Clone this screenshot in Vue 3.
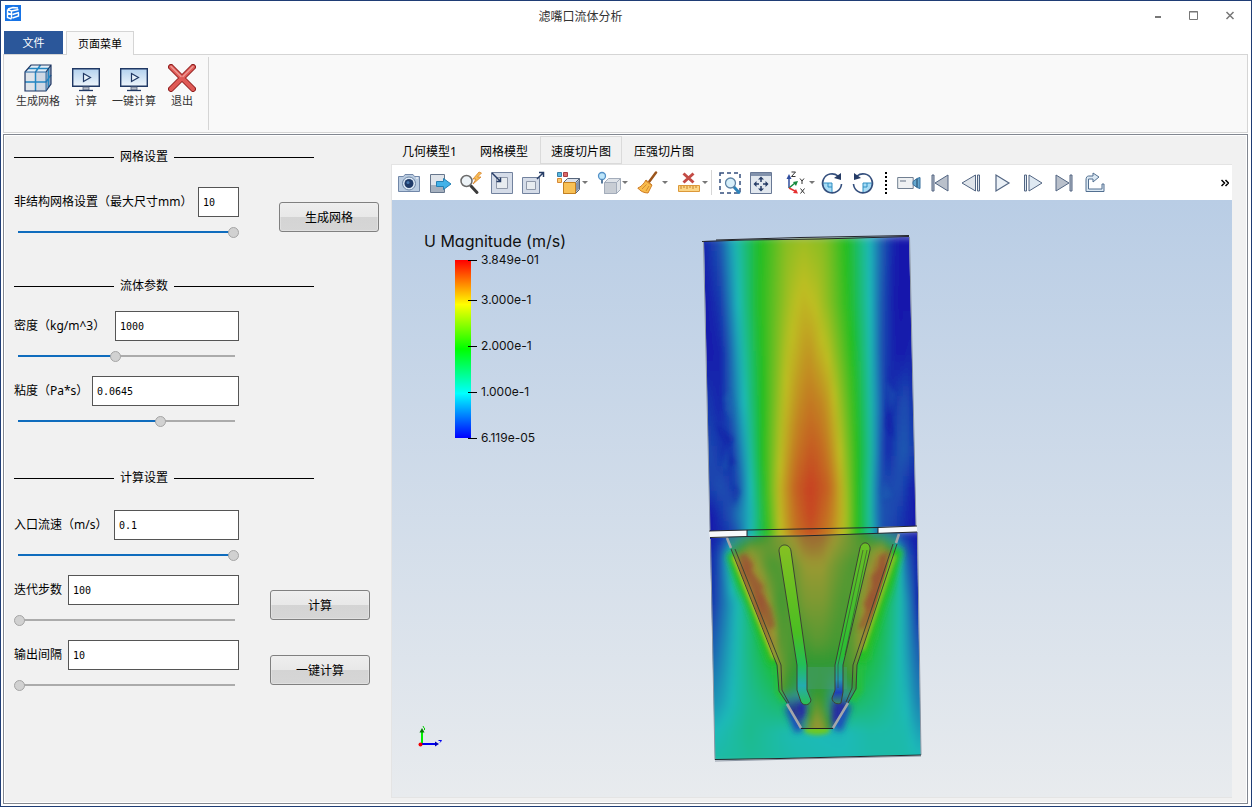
<script setup>
import { ref, reactive } from 'vue'

const sections = reactive([
  {
    title: '网格设置',
    name: 'mesh',
    fields: [
      { id: 'size', label: '非结构网格设置（最大尺寸mm）', value: '10', box: 41, pos: 100, action: '生成网格', wide: true },
    ],
  },
  {
    title: '流体参数',
    name: 'fluid',
    fields: [
      { id: 'density', label: '密度（kg/m^3）', value: '1000', box: 124, pos: 45 },
      { id: 'viscosity', label: '粘度（Pa*s）', value: '0.0645', box: 147, pos: 66 },
    ],
  },
  {
    title: '计算设置',
    name: 'solve',
    fields: [
      { id: 'inlet', label: '入口流速（m/s）', value: '0.1', box: 125, pos: 100 },
      { id: 'steps', label: '迭代步数', value: '100', box: 171, pos: 0, action: '计算' },
      { id: 'interval', label: '输出间隔', value: '10', box: 171, pos: 0, action: '一键计算' },
    ],
  },
])

const views = ['几何模型1', '网格模型', '速度切片图', '压强切片图']
const activeView = ref(2)

const legend = [
  { text: '3.849e-01', y: 0 },
  { text: '3.000e-1', y: 40 },
  { text: '2.000e-1', y: 86 },
  { text: '1.000e-1', y: 132 },
  { text: '6.119e-05', y: 178 },
]

/* Velocity samples: y, then [x, normalised magnitude] pairs */
const upperRows = [
  [236, [[704, 0.02], [720, 0.1], [737, 0.27], [760, 0.5], [785, 0.66], [803, 0.7], [825, 0.66], [847, 0.5], [867, 0.27], [885, 0.08], [896, 0], [912, 0]]],
  [300, [[705, 0], [720, 0.05], [738, 0.25], [759, 0.5], [790, 0.72], [803, 0.77], [817, 0.74], [829, 0.66], [849, 0.5], [870, 0.25], [883, 0.08], [895, 0], [912, 0]]],
  [350, [[706, 0], [722, 0.02], [741, 0.25], [761, 0.5], [787, 0.74], [808, 0.83], [828, 0.74], [853, 0.5], [871, 0.25], [883, 0.07], [897, 0], [913, 0.02]]],
  [400, [[707, 0.05], [720, 0.02], [730, 0.1], [744, 0.25], [762, 0.5], [784, 0.75], [800, 0.85], [811, 0.88], [825, 0.84], [835, 0.75], [856, 0.5], [872, 0.25], [882, 0.1], [888, 0.02], [905, 0.09], [914, 0.03]]],
  [450, [[709, 0.08], [730, 0.02], [748, 0.25], [762, 0.5], [781, 0.75], [795, 0.88], [812, 0.94], [826, 0.89], [840, 0.75], [858, 0.5], [873, 0.25], [880, 0.1], [887, 0.02], [903, 0.11], [915, 0.05]]],
  [485, [[709, 0.06], [722, 0.09], [735, 0.04], [750, 0.25], [764, 0.5], [778, 0.75], [795, 0.92], [811, 0.98], [830, 0.91], [843, 0.75], [858, 0.5], [872, 0.25], [880, 0.08], [900, 0.08], [915, 0]]],
  [512, [[711, 0], [730, 0.09], [752, 0.25], [765, 0.5], [779, 0.75], [795, 0.9], [811, 0.97], [830, 0.88], [844, 0.75], [858, 0.5], [871, 0.27], [879, 0.1], [895, 0.07], [915, 0]]],
  [540, [[711, 0], [735, 0.05], [750, 0.25], [767, 0.5], [779, 0.72], [795, 0.88], [812, 0.93], [830, 0.85], [845, 0.72], [858, 0.5], [870, 0.3], [882, 0.08], [916, 0]]],
]
const lowerRows = [
  [530, [[711, 0], [728, 0.06], [740, 0.15], [790, 0.3], [885, 0.15], [897, 0.05], [917, 0]]],
  [555, [[711, 0.02], [722, 0.12], [730, 0.3], [740, 0.6], [890, 0.6], [897, 0.35], [904, 0.15], [917, 0.01]]],
  [600, [[713, 0.05], [725, 0.15], [740, 0.28], [755, 0.4], [770, 0.55], [875, 0.5], [888, 0.38], [900, 0.27], [912, 0.12], [918, 0.02]]],
  [650, [[714, 0.12], [735, 0.25], [755, 0.38], [775, 0.5], [860, 0.5], [885, 0.37], [905, 0.22], [919, 0.1]]],
  [700, [[716, 0.19], [745, 0.3], [775, 0.37], [790, 0.4], [850, 0.4], [880, 0.33], [905, 0.25], [920, 0.15]]],
  [730, [[716, 0.25], [750, 0.32], [790, 0.26], [840, 0.24], [870, 0.28], [905, 0.27], [921, 0.2]]],
  [764, [[716, 0.29], [760, 0.3], [800, 0.27], [850, 0.26], [890, 0.28], [921, 0.27]]],
]
const innerRows = [
  [528, [[730, 0.08], [750, 0.2], [775, 0.66], [795, 0.82], [805, 0.9], [822, 0.9], [835, 0.78], [860, 0.55], [880, 0.15], [898, 0.05]]],
  [545, [[732, 0.3], [750, 0.65], [770, 0.62], [790, 0.7], [806, 0.84], [820, 0.84], [835, 0.72], [860, 0.58], [882, 0.7], [893, 0.4]]],
  [562, [[740, 0.85], [746, 0.92], [757, 0.72], [770, 0.55], [790, 0.62], [806, 0.75], [822, 0.75], [838, 0.64], [855, 0.55], [868, 0.68], [880, 0.92], [893, 0.85]]],
  [600, [[752, 0.82], [760, 0.95], [768, 0.75], [778, 0.54], [795, 0.6], [806, 0.68], [824, 0.68], [838, 0.58], [850, 0.56], [863, 0.72], [872, 0.95], [880, 0.9]]],
  [640, [[765, 0.85], [773, 0.82], [780, 0.6], [800, 0.54], [818, 0.6], [838, 0.54], [855, 0.62], [862, 0.8], [868, 0.8]]],
  [665, [[779, 0.7], [787, 0.57], [800, 0.48], [815, 0.47], [835, 0.48], [850, 0.57], [857, 0.62]]],
  [688, [[781, 0.62], [790, 0.45], [800, 0.34], [812, 0.48], [822, 0.5], [835, 0.3], [848, 0.35], [857, 0.55]]],
  [704, [[788, 0.02], [803, 0.02], [811, 0.5], [817, 0.64], [825, 0.5], [834, 0.04], [848, 0.02]]],
  [730, [[796, 0.05], [802, 0.2], [808, 0.68], [817, 0.82], [827, 0.7], [832, 0.2], [838, 0.05]]],
]

const ramp = [[24, 24, 172], [30, 186, 184], [32, 190, 32], [190, 190, 32], [200, 52, 32]]

function colour(v, haze) {
  const t = Math.min(Math.max(v, 0), 0.999) * 4
  const i = Math.floor(t)
  const mix = ramp[i].map((c, k) => c + (ramp[i + 1][k] - c) * (t - i))
  return `rgb(${mix.map((c) => Math.round(c * (1 - haze) + 82 * haze)).join(',')})`
}

function sample(points, x) {
  if (x <= points[0][0]) return points[0][1]
  for (let i = 1; i < points.length; i++) {
    if (x <= points[i][0]) {
      const [x0, v0] = points[i - 1]
      const [x1, v1] = points[i]
      return v0 + ((v1 - v0) * (x - x0)) / (x1 - x0)
    }
  }
  return points[points.length - 1][1]
}

function strips(name, rows, haze) {
  const out = []
  const step = 5
  for (let y = rows[0][0]; y < rows[rows.length - 1][0]; y += step) {
    let r = rows.findIndex((row) => row[0] > y) - 1
    if (r < 0) r = 0
    const f = (y - rows[r][0]) / (rows[r + 1][0] - rows[r][0])
    const stops = []
    for (let k = 0; k <= 36; k++) {
      const x = 702 + k * 6
      const v = sample(rows[r][1], x) * (1 - f) + sample(rows[r + 1][1], x) * f
      stops.push({ at: k / 36, fill: colour(v, haze) })
    }
    out.push({ id: `${name}${y}`, y, stops })
  }
  return out
}

const upper = strips('u', upperRows, 0)
const lower = strips('l', lowerRows, 0)
const inner = strips('i', innerRows, 0.34)
const allStrips = [...upper, ...lower, ...inner]
</script>

<template>
  <div class="window">
    <header class="titlebar">
      <svg class="logo" viewBox="0 0 16 16" aria-hidden="true">
        <rect width="16" height="16" fill="#1673e6" />
        <path d="M2.5 4.5v8l4 1.5M2.5 8l4 1.500M2.500 4.500l4 1.500v7.500M6.500 6l7-1.500M7.500 9.500l6.500-2M7.500 13l6-2v-3M3 4l5-1.500 5 .5" fill="none" stroke="#fff" stroke-width="1.4" />
      </svg>
      <h1>滤嘴口流体分析</h1>
      <div class="controls">
        <button aria-label="最小化"><svg viewBox="0 0 12 12"><path d="M3 7h6" stroke="#777" stroke-width="2" /></svg></button>
        <button aria-label="最大化"><svg viewBox="0 0 12 12"><path d="M1.500 1.500h8v8h-8zM1 2h9" fill="none" stroke="#777" /></svg></button>
        <button aria-label="关闭"><svg viewBox="0 0 12 12"><path d="M2.500 2l7 7M9.500 2l-7 7" stroke="#777" stroke-width="1.500" /></svg></button>
      </div>
    </header>

    <nav class="menu">
      <button class="file">文件</button>
      <button class="page">页面菜单</button>
    </nav>

    <div class="ribbon">
      <div class="ribbon-group">
        <button>
          <svg viewBox="0 0 28 28">
            <path d="M1 8l6-7h20l-5 7z" fill="#e4eef7" />
            <path d="M1 8h21v19H1z" fill="#cfd8e4" />
            <path d="M2 9h9v8H2zM2 19h9v7H2z" fill="#dfe4ea" />
            <path d="M22 8l5-7v19l-5 7z" fill="#98a8c0" />
            <path d="M11.500 8v19M1 18h21l5-7M11.500 8l5-7M4 4.500h20.500v19" fill="none" stroke="#2487c2" stroke-width="1.500" />
            <path d="M1 8l6-7h20v19l-5 7H1zM22 8l5-7" fill="none" stroke="#203864" stroke-width="1.200" />
            <path d="M1 8h21v19" fill="none" stroke="#2b6ca6" />
          </svg>
          <span>生成网格</span>
        </button>
        <button v-for="name in ['计算', '一键计算']" :key="name">
          <svg viewBox="0 0 28 28">
            <defs><linearGradient id="screen" x2="0" y2="1"><stop stop-color="#b3d1ee" /><stop offset="1" stop-color="#eef5fb" /></linearGradient></defs>
            <path d="M.7 4.700h26.600v17.600H.7z" fill="url(#screen)" stroke="#203864" stroke-width="1.400" />
            <path d="M11 23h6v3h-6z" fill="#b8bec9" stroke="#566680" stroke-width=".8" />
            <path d="M7 26.500h14" stroke="#203864" stroke-width="1.300" />
            <path d="M11.500 9.500v8l7-4z" fill="#e8f2fa" stroke="#203864" stroke-width="1.200" />
          </svg>
          <span>{{ name }}</span>
        </button>
        <button>
          <svg viewBox="0 0 28 28">
            <path d="M3 3l22 22M25 3L3 25" stroke="#8f2020" stroke-width="6" stroke-linecap="round" />
            <path d="M3 3l22 22M25 3L3 25" stroke="#df5a56" stroke-width="4" stroke-linecap="round" />
            <path d="M3 2.500l10 10M25 2.500L15 12.500" stroke="#ee9a94" stroke-width="1.500" stroke-linecap="round" />
          </svg>
          <span>退出</span>
        </button>
      </div>
    </div>

    <main class="body">
      <form class="settings" @submit.prevent>
        <section v-for="s in sections" :key="s.name" :class="s.name">
          <h2>{{ s.title }}</h2>
          <div class="fields">
            <div v-for="f in s.fields" :key="f.id" class="field">
              <div class="entry">
                <div class="line">
                  <label :for="f.id">{{ f.label }}</label>
                  <input :id="f.id" v-model="f.value" type="text" :style="{ width: f.box + 'px' }" />
                </div>
                <input v-model="f.pos" type="range" min="0" max="100" :aria-label="f.label" :style="{ '--pos': f.pos + '%' }" />
              </div>
              <button v-if="f.action" type="button" class="push" :class="{ far: f.wide }">{{ f.action }}</button>
            </div>
          </div>
        </section>
      </form>

      <section class="viewer">
        <div class="tabs" role="tablist">
          <button v-for="(v, i) in views" :key="v" role="tab" :aria-selected="i === activeView" :class="{ active: i === activeView }" @click="activeView = i">{{ v }}</button>
        </div>
        <div class="frame">
          <div class="toolbar">
            <div class="tools">
              <button aria-label="截图"><svg viewBox="0 0 24 24">
                <path d="M1.500 5.500h5l1.500-2h8l1.500 2h5v15h-21z" fill="#b9cbe0" stroke="#7187a8" />
                <circle cx="12" cy="12.500" r="6.500" fill="#dde9f5" stroke="#6e86a6" /><circle cx="12" cy="12.500" r="4.500" fill="#1f3a68" /><circle cx="11" cy="11.500" r="1.500" fill="#4777ad" />
                <path d="M19 7h2" stroke="#fff" />
              </svg></button>
              <button aria-label="导出"><svg viewBox="0 0 24 24">
                <path d="M2.500 3.500h14v18h-14z" fill="#dfe4ea" stroke="#66768c" /><path d="M3 14h13v7H3z" fill="#a5b0be" />
                <path d="M8.500 10.500h7v-3l7.500 5.500-7.500 5.500v-3h-7z" fill="#43b2e8" stroke="#2480b4" />
              </svg></button>
              <button aria-label="快速查看"><svg viewBox="0 0 24 24">
                <path d="M12 15l6 6.500" stroke="#3b3b3b" stroke-width="3" stroke-linecap="round" /><circle cx="7.500" cy="10" r="5.500" fill="#edf3f7" stroke="#6a6a6a" stroke-width="1.500" />
                <path d="M20 1l-6 7h3l-3 5 8-7h-3.500l4-4z" fill="#f8bd55" stroke="#d5832a" stroke-width=".8" />
              </svg></button>
              <button aria-label="缩放至数据"><svg viewBox="0 0 24 24">
                <path d="M1.500 1.500h21v21h-21z" fill="#d5dce8" stroke="#72829e" /><path d="M6.500 6.500h11v11h-11z" fill="#e8ecf0" stroke="#9099aa" />
                <path d="M2 2l8 8M10.500 6.500v4h-4" fill="none" stroke="#263c66" stroke-width="1.500" />
              </svg></button>
              <button aria-label="缩放至最近"><svg viewBox="0 0 24 24">
                <path d="M1.500 6.500h17v16h-17z" fill="#d5dce8" stroke="#72829e" /><path d="M5.500 10.500h9v8h-9z" fill="#e8ecf0" stroke="#9099aa" />
                <path d="M16 8l6-6M18 1.500h4.500V6" fill="none" stroke="#263c66" stroke-width="1.500" />
              </svg></button>
            </div>
            <div class="tools combos">
              <button aria-label="着色"><svg viewBox="0 0 24 24">
                <path d="M.5 1.500h4v4h-4z" fill="#59b9df" stroke="#397fa8" /><path d="M6.500 1.500h4v4h-4z" fill="#db6b6b" stroke="#a63e44" /><path d="M.5 7.500h4v4h-4z" fill="#f8cb72" stroke="#d88734" />
                <path d="M6.500 11.500l4-4h12v11l-4 4h-12z" fill="#dce1ea" stroke="#56657b" /><path d="M6.500 11.500h12v11h-12z" fill="#f8c156" stroke="#c48020" /><path d="M18.500 11.500l4-4" stroke="#56657b" /><path d="M19 12l3-3v9l-3 3z" fill="#8593aa" />
              </svg><i></i></button>
              <button aria-label="光照"><svg viewBox="0 0 24 24">
                <path d="M7.500 11.500l4-4h12v11l-4 4h-12z" fill="#dfe3e8" stroke="#a3acba" /><path d="M7.500 11.500h12v11h-12z" fill="#c8cdd4" stroke="#a3acba" /><path d="M19.500 11.500l4-4" stroke="#a3acba" />
                <circle cx="5" cy="5" r="3.500" fill="#bce5fa" stroke="#5491c7" stroke-width="1.300" /><path d="M5 8.500v4" stroke="#597a9c" stroke-width="2" />
              </svg><i></i></button>
              <button aria-label="清除"><svg viewBox="0 0 24 24">
                <path d="M12 11l7-9.500" stroke="#9b551c" stroke-width="2.500" stroke-linecap="round" /><path d="M9 9l6 5-4 8C7 22 3 20 .8 17c3-1 6-4 8.200-8z" fill="#f9bc4b" stroke="#cf7c25" />
                <path d="M9.500 13.500L5 18M12 15l-3 5M8 9.500l7 5" stroke="#d08a34" />
              </svg><i></i></button>
              <button aria-label="删除标尺"><svg viewBox="0 0 24 24">
                <path d="M6.500 2.500l10 9M16.500 2.500l-10 9" stroke="#c34b45" stroke-width="3" /><path d="M1.500 14.500h21v6h-21z" fill="#fbd584" stroke="#dc9839" />
                <path d="M4 15v3M7 15v2M10 15v3M13 15v2M16 15v3M19 15v2" stroke="#c5812a" />
              </svg><i></i></button>
            </div>
            <span class="rule"></span>
            <div class="tools">
              <button aria-label="框选缩放"><svg viewBox="0 0 24 24">
                <path d="M2 2h20v20H2z" fill="none" stroke="#344f7d" stroke-width="1.500" stroke-dasharray="4 3" />
                <path d="M16 16l5 5.500" stroke="#2d83ba" stroke-width="3" stroke-linecap="round" /><circle cx="12.500" cy="12" r="5" fill="#d7effa" stroke="#5e83a5" stroke-width="1.300" />
              </svg></button>
              <button aria-label="适应窗口"><svg viewBox="0 0 24 24">
                <path d="M1.500 1.500h21v21h-21z" fill="#e1e7ee" stroke="#687895" /><path d="M2 2h20v3H2z" fill="#8292ac" />
                <path d="M12 8v3M12 15v3M7 13h3M14 13h3" stroke="#263c66" stroke-width="1.500" /><path d="M12 5.500l3 3H9zM12 20.500l3-3H9zM4.500 13l3-3v6zM19.500 13l-3-3v6z" fill="#263c66" />
              </svg></button>
            </div>
            <div class="tools axes">
              <button class="combo" aria-label="视图方向"><svg viewBox="0 0 24 24">
                <path d="M5 17V6" stroke="#304e9e" stroke-width="1.500" /><path d="M5 3l2.500 5h-5z" fill="#304e9e" /><path d="M5 17l6-5" stroke="#178a3d" stroke-width="1.500" /><path d="M14 10l-5 1 3 4z" fill="#178a3d" /><path d="M5 17l6 3" stroke="#e52f2f" stroke-width="1.500" /><path d="M14 22.500l-5-.5 3-4z" fill="#e52f2f" />
                <path d="M7.500 1h4l-4 4.500h4M16 7.500l2 2.500 2-2.500M18 10v3M16.500 17.500l4 5M20.500 17.500l-4 5" fill="none" stroke="#333" />
              </svg><i></i></button>
              <button v-for="n in 2" :key="n" :aria-label="n === 1 ? '顺时针旋转' : '逆时针旋转'"><svg viewBox="0 0 24 24" :class="{ flip: n === 2 }">
                <path d="M2.500 12h9.500v9.500A9.500 9.500 0 0 1 2.500 12z" fill="#a8dcf5" /><path d="M2.500 12H12v9.500M8 12v4h4" fill="none" stroke="#2f8fc4" />
                <path d="M21.500 13A9.500 9.500 0 1 1 18 5" fill="none" stroke="#344f7d" stroke-width="1.600" /><path d="M21 2v7l-7-2z" fill="#263c66" />
              </svg></button>
            </div>
            <span class="grip"></span>
            <div class="tools">
              <button aria-label="录制"><svg viewBox="0 0 24 24">
                <path d="M.7 6.500h15.500v11H.7z" fill="#eef0f2" stroke="#717f91" /><path d="M3 9h6v2H3z" fill="#a8b0bb" /><path d="M23 6.500v11l-3-1-4-3v-3l4-3z" fill="#65a8cf" stroke="#366e9c" /><path d="M20 8v8" stroke="#21415f" />
              </svg></button>
              <button aria-label="第一帧"><svg viewBox="0 0 24 24"><path d="M4 4h2v16H4zM20 4v16L7 12z" fill="#b9c0cb" stroke="#526582" /></svg></button>
              <button aria-label="上一帧"><svg viewBox="0 0 24 24"><path d="M18.500 4h2v16h-2zM16.500 4v16L3 12z" fill="#dfe4ea" stroke="#526582" /></svg></button>
              <button aria-label="播放"><svg viewBox="0 0 24 24"><path d="M6 4v16l13-8z" fill="#eaf0f6" stroke="#526582" stroke-width="1.200" /></svg></button>
              <button aria-label="下一帧"><svg viewBox="0 0 24 24"><path d="M3.500 4h2v16h-2zM8 4v16l13-8z" fill="#dfe9f2" stroke="#526582" /></svg></button>
              <button aria-label="最后一帧"><svg viewBox="0 0 24 24"><path d="M18 4h2v16h-2zM4 4v16l13-8z" fill="#b9c0cb" stroke="#526582" /></svg></button>
              <button aria-label="循环"><svg viewBox="0 0 24 24"><path d="M3 9V20.500h18V13h-2v5H5.500V8H10v3l6-5-6-4v3H5.500C4 5 3 6.500 3 9z" fill="#dbe8f3" stroke="#526f90" /></svg></button>
            </div>
            <button class="more" aria-label="更多"><svg viewBox="0 0 8 8"><path d="M.5 1l3 3-3 3M4.500 1l3 3-3 3" fill="none" stroke="#000" stroke-width="1.500" /></svg></button>
          </div>

          <div class="viewport">
            <div class="legend">
              <p>U Magnitude (m/s)</p>
              <div class="scale">
                <span v-for="l in legend" :key="l.text" :style="{ top: l.y + 'px' }">{{ l.text }}</span>
              </div>
            </div>

            <svg class="model" viewBox="700 230 224 536" role="img" aria-label="速度切片">
              <defs>
                <linearGradient v-for="s in allStrips" :id="s.id" :key="s.id" gradientUnits="userSpaceOnUse" x1="702" x2="918">
                  <stop v-for="p in s.stops" :key="p.at" :offset="p.at" :stop-color="p.fill" />
                </linearGradient>
                <linearGradient id="tubeL" x2="0" y2="1"><stop stop-color="#86c022" /><stop offset=".55" stop-color="#4abe22" /><stop offset=".75" stop-color="#22be58" /><stop offset=".88" stop-color="#24acb0" /><stop offset="1" stop-color="#2cbe50" /></linearGradient>
                <linearGradient id="tubeR" x2="0" y2="1"><stop stop-color="#6abe24" /><stop offset=".7" stop-color="#28be34" /><stop offset=".85" stop-color="#2496b0" /><stop offset=".93" stop-color="#2040b8" /><stop offset="1" stop-color="#3a8c60" /></linearGradient>
                <filter id="vsoft" x="-5%" y="-5%" width="110%" height="110%"><feGaussianBlur stdDeviation="2 4" /></filter>
                <filter id="soft" x="-50%" y="-50%" width="200%" height="200%"><feGaussianBlur stdDeviation="3" /></filter>
                <filter id="fine" x="-50%" y="-50%" width="200%" height="200%"><feGaussianBlur stdDeviation="2" /></filter>
                <clipPath id="cutU"><path d="M704 241L909 236 916 526 878 527V534L747 537V530L710 531z" /></clipPath>
                <clipPath id="cutL"><path d="M710 538L917 532 921 755 715 760z" /></clipPath>
                <clipPath id="cutI"><path d="M728 537L899 533 893 549 857 665 857 688 848 703 833 728H801L787 703 780 690 778 666 731 549z" /></clipPath>
              </defs>

              <path d="M709 530L917 525V533L710 539z" fill="#f6f8fa" />

              <g clip-path="url(#cutL)">
                <g filter="url(#vsoft)"><rect v-for="s in lower" :key="s.id" x="695" :y="s.y" width="235" height="6" :fill="`url(#${s.id})`" /></g>
                <path d="M734 552L777 662" stroke="#28be28" stroke-width="16" filter="url(#soft)" />
                <path d="M897 548L860 658" stroke="#28be28" stroke-width="14" filter="url(#soft)" />
                <path d="M735 555L776 658" stroke="#d2c020" stroke-width="7" filter="url(#fine)" />
                <path d="M894 555L862 650" stroke="#b4c022" stroke-width="4" filter="url(#fine)" />
                <path d="M779 666V691L785 700M859 666V690L852 699" fill="none" stroke="#28be40" stroke-width="8" filter="url(#fine)" />
                <path d="M789 706L800 731M847 704L837 730" stroke="#1c48ba" stroke-width="10" filter="url(#soft)" />
                <ellipse cx="817" cy="730" rx="13" ry="5" fill="#70c820" filter="url(#fine)" />
              </g>
              <g clip-path="url(#cutU)">
                <g filter="url(#vsoft)"><rect v-for="s in upper" :key="s.id" x="695" :y="s.y" width="235" height="6" :fill="`url(#${s.id})`" /></g>
                <g filter="url(#fine)" opacity=".35">
                  <path d="M724 406l10-4-2 18zM726 448l10 20-14 2zM722 400l8-10 3 16zM884 480l8 16-10 4zM886 380l10 14-8 26z" fill="#1a6cb4" />
                  <path d="M716 425l18 14-6 8zM728 452l8 12-8 6zM888 400l6 40-8-14zM734 484l6 8-6 14z" fill="#1010a0" />
                </g>
              </g>
              <g clip-path="url(#cutI)">
                <g filter="url(#vsoft)"><rect v-for="s in inner" :key="s.id" x="695" :y="s.y" width="235" height="6" :fill="`url(#${s.id})`" /></g>
                <g filter="url(#fine)">
                  <path d="M738 556l8-3 7 12-2 5 12 16-2 6 10 16 4 18-6 4zM890 550l-11 6 1 12-9 8 2 12-10 16 3 6-9 20 8-3z" fill="#984a30" opacity=".6" />
                  <path d="M797 706l7-6 1 12-5 10zM836 702l10 3-7 14-6 3z" fill="#272ea2" />
                </g>
                <path d="M797 667H847V689H797z" fill="#4a9a78" opacity=".4" />
              </g>

              <path d="M779 551C779 543 790 543 791 551L807 665V690L811 700C810 706 803 706 801 702L797 690V665z" fill="url(#tubeL)" />
              <path d="M860 548C862 540 871 542 870 550L843 665V692L841 703C838 705 832 703 832 698L835 690V665z" fill="url(#tubeR)" />

              <g fill="none" stroke="#3c4234" stroke-width="1">
                <path d="M779 551C779 543 790 543 791 551L807 665V690L811 700C810 706 803 706 801 702L797 690V665z" />
                <path d="M860 548C862 540 871 542 870 550L843 665V692L841 703C838 705 832 703 832 698L835 690V665z" />
                <path d="M863 550L838 665V688M867 550L845 655" stroke-opacity=".6" />
                <path d="M731 549L777 665 779 691 787 703M735 549L781 665 782 690 789 703" />
                <path d="M897 544L857 665 856 689 848 703M893 544L853 665 852 688 846 702" />
                <path d="M801 728.500H833" stroke="#222" />
              </g>
              <g stroke="#a4a6aa" stroke-width="2.500">
                <path d="M727 538L731 548M899 534L896 543M787 704L801 728M848 703L833 728" />
              </g>
              <g fill="none" stroke="#8c96a4">
                <path d="M703.500 242L710 530M909.500 237L916 526M710.500 539L715 760M917.500 532L921 755" />
                <path d="M715 761L921 756" />
              </g>
              <g fill="none" stroke="#24262a">
                <path d="M702 241.500L745 240 820 239 909 236.500M716 240L800 237.500 909 235.500" />
                <path d="M709 531L747 530V536M917 526L878 527.500V533M747 530L878 527.500M710 537.500L747 536.500 800 536 917 532" />
                <path d="M715 759.500L780 758.500 921 755" />
              </g>
            </svg>

            <svg class="gizmo" viewBox="0 0 26 24" aria-hidden="true">
              <path d="M4 19h15" stroke="#0000f0" stroke-width="2" /><path d="M18 16.500l4 2.500-4 2.500z" fill="#0000b8" /><path d="M21.500 15.500h3l-1.500 2" fill="none" stroke="#0000f0" />
              <path d="M5 18V6" stroke="#00f000" stroke-width="2" /><path d="M5 3l2.500 4.500h-5z" fill="#067806" /><path d="M6 1l1 2M7.500 5V3" stroke="#00d000" />
              <circle cx="3.500" cy="19.500" r="2" fill="#f00000" />
            </svg>
          </div>
        </div>
      </section>
    </main>
  </div>
</template>

<style>
body { margin: 0; }
</style>

<style scoped>
* { box-sizing: border-box; }
.window {
  display: flex; flex-direction: column; min-height: 100vh; padding: 0 3px 2px 2px;
  border: 1px solid #1f3d75; background: #fff; color: #000;
  font-family: "Noto Sans", "Noto Sans CJK SC", sans-serif; font-size: 12px; line-height: 16px;
}
button { margin: 0; padding: 0; border: 0; background: none; color: inherit; font: inherit; }
svg { display: block; }

.titlebar { display: flex; height: 30px; align-items: center; }
.logo { width: 16px; height: 16px; margin: 0 0 6px 2px; }
h1 { flex: 1; margin: 0; padding-top: 1px; font-size: 12px; font-weight: 400; text-align: center; color: #333; }
.controls { display: flex; justify-content: flex-end; gap: 24px; padding: 0 12px; }
.controls svg { width: 12px; height: 12px; }

.menu { display: flex; gap: 3px; height: 23px; padding-left: 1px; font-size: 11px; }
.menu .file { width: 59px; background: #2b579a; color: #fff; }
.menu .page { position: relative; z-index: 1; width: 68px; height: 24px; border: 1px solid #d5d5d5; border-bottom: 0; background: #f9f9f9; }

.ribbon { display: flex; height: 79px; padding: 2px 0; border: 1px solid #d5d5d5; background: #f9f9f9; font-size: 11px; color: #333; }
.ribbon-group { display: flex; padding: 7px 2px 0 10px; border-right: 1px solid #d5d5d5; }
.ribbon-group button { display: flex; flex-direction: column; align-items: center; gap: 1px; width: 48px; white-space: nowrap; }
.ribbon-group svg { width: 28px; height: 28px; }

.body {
  display: grid; grid-template-columns: 386px minmax(0, 1fr); flex: 1; margin-top: 1px; padding: 1px;
  border: 1px solid #828790; background: #f1f1f1; box-shadow: inset 0 0 0 1px #fff;
}
.settings { padding: 13px 0 0 9px; }
h2 { display: flex; align-items: center; gap: 6px; width: 300px; margin: 0; font-size: 12px; font-weight: 400; line-height: 16px; }
h2::before { content: ""; width: 100px; height: 1px; background: #000; }
h2::after { content: ""; flex: 1; height: 1px; background: #000; }
.fields { display: grid; gap: 14px; }
.mesh .fields { padding: 22px 0 40px; }
.fluid .fields { padding: 17px 0 43px; }
.solve .fields { padding: 24px 0 0; }
.field { display: flex; align-items: flex-start; }
.entry { display: grid; gap: 10px; width: 225px; }
.line { display: flex; align-items: center; justify-content: space-between; height: 30px; white-space: nowrap; }
input[type="text"] {
  height: 30px; padding: 0 4px; border: 1px solid #555; border-radius: 0; outline: 0; background: #fff; color: #000;
  font-family: "DejaVu Sans Mono", monospace; font-size: 10px;
}
input[type="range"] {
  appearance: none; width: 100%; height: 11px; margin: 0;
  background: linear-gradient(to right, #0f6cbd var(--pos), #ababab var(--pos)) 4px 4px / calc(100% - 8px) 2px no-repeat;
}
input[type="range"]::-webkit-slider-thumb {
  appearance: none; width: 11px; height: 11px; border: 1px solid #a5a5a5; border-radius: 50%; background: #d1d1d1;
}
.push {
  width: 100px; height: 30px; margin: 15px 0 0 31px; padding-top: 1px; border: 1px solid #808080; border-radius: 3px;
  background: linear-gradient(#eee, #e8e8e8 50%, #d4d4d4 50%, #d6d6d6); box-shadow: inset 0 0 0 1px #f0f0f066;
}
.push.far { margin-left: 40px; }

.viewer { display: flex; flex-direction: column; min-width: 0; padding: 0 14px 4px 0; }
.tabs { display: flex; gap: 1px; height: 28px; }
.tabs button { padding: 3px 11px 0; }
.tabs .active { outline: 1px solid #dadada; outline-offset: -1px; }
.frame { display: flex; flex-direction: column; flex: 1; border: 1px solid #e4e4e4; border-right: 0; background: #fff; }
.toolbar { display: flex; align-items: center; height: 35px; padding-left: 1px; }
.tools { display: flex; }
.tools button { display: flex; align-items: center; justify-content: center; width: 31px; height: 31px; }
.tools svg { width: 24px; height: 24px; }
.combos { gap: 8px; margin-left: 9px; }
.combos button, .tools .combo { width: 32px; gap: 1px; justify-content: flex-start; }
.tools i { width: 5px; height: 0; border: solid transparent; border-width: 3px 3px 0; border-top-color: #777; flex: none; }
.rule { width: 1px; height: 25px; margin: 0 2px; background: #d6d6d6; }
.axes { margin-left: 8px; }
.flip { transform: scaleX(-1); }
.grip { width: 2px; height: 22px; margin: 0 6px 0 7px; background: repeating-linear-gradient(#000 0 2px, #fff 2px 4px); }
.more { margin: 0 3px 0 auto; }
.more svg { width: 8px; height: 8px; }

.viewport { position: relative; display: flex; justify-content: center; flex: 1; padding-top: 30px; background: linear-gradient(#b9cde5, #e8ebee); }
.model { width: 224px; height: 536px; }
.legend { position: absolute; left: 32px; top: 30px; font-family: Inter, "Liberation Sans", sans-serif; font-feature-settings: "cv11"; color: #111; }
.legend p { margin: 0; font-size: 16px; line-height: 22px; }
.scale { position: relative; width: 16px; height: 178px; margin: 8px 0 0 31px; background: linear-gradient(#f00, #ff0 25%, #0f0 50%, #0ff 75%, #00f); }
.scale span { position: absolute; left: 26px; font-size: 12px; line-height: 16px; transform: translateY(-50%); white-space: nowrap; }
.scale span::before { content: ""; position: absolute; left: -13px; top: 8px; width: 9px; height: 1px; background: #000; }
.gizmo { position: absolute; left: 25px; bottom: 48px; width: 26px; height: 24px; }
</style>
